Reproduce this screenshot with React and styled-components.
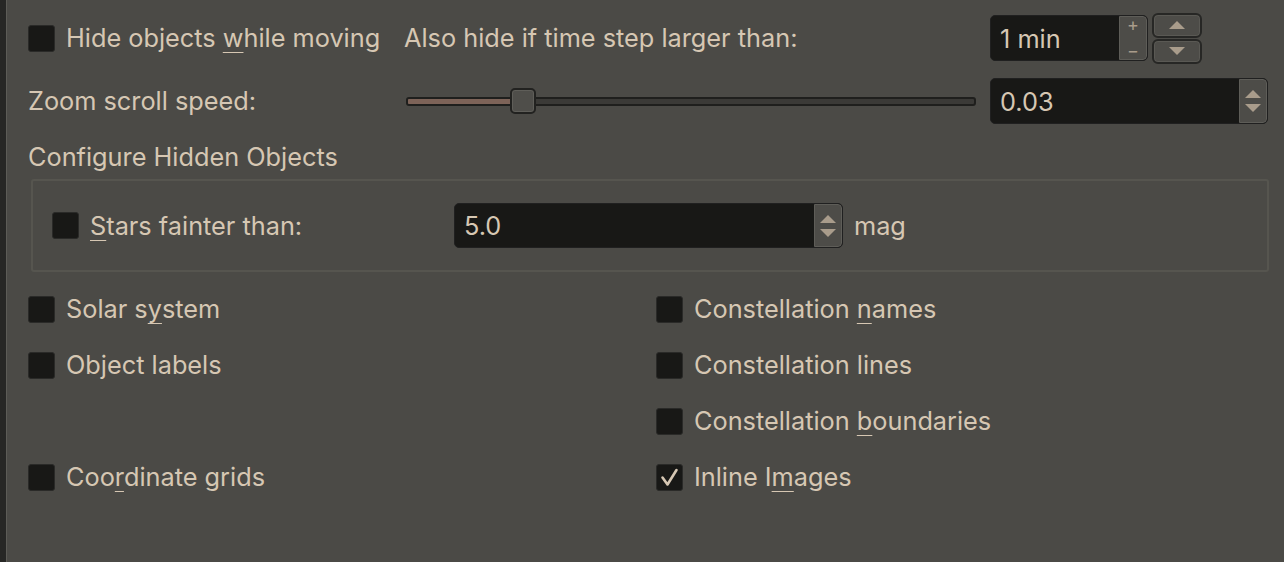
import React from 'react'
import styled, { createGlobalStyle } from 'styled-components'

const colors = {
  bg: '#4b4a46',
  strip: '#272725',
  text: '#d6c7b3',
  field: '#181816',
  fieldBorder: '#2a2a28',
  arrow: '#a99c8b',
  btn: '#4d4c48',
  frame: '#56554f',
}

const GlobalStyle = createGlobalStyle`
  html, body {
    margin: 0;
    padding: 0;
    background: ${colors.bg};
  }
  body {
    font-family: Inter, "Noto Sans", sans-serif;
    color: ${colors.text};
    font-size: 25.3px;
  }
`

const Page = styled.div`
  display: flex;
  width: 1284px;
  height: 562px;
  overflow: hidden;
  background: ${colors.bg};
`

const Strip = styled.div`
  width: 6px;
  background: ${colors.strip};
  border-right: 1px solid #5d5c57;
  flex-shrink: 0;
`

const Content = styled.div`
  flex: 1;
  padding: 12px 15px 0 21px;
  display: flex;
  flex-direction: column;
`

const TopGrid = styled.div`
  display: grid;
  grid-template-columns: 362px 572px 278px;
  column-gap: 14px;
  row-gap: 14px;
  grid-template-rows: 52px 46px;
  align-items: center;
`

const Label = styled.span`
  white-space: nowrap;
  line-height: 1;
`

const Mn = styled.span`
  text-decoration: underline;
  text-decoration-thickness: 1px;
  text-underline-offset: 5px;
`

const CheckRow = styled.label`
  display: flex;
  align-items: center;
  gap: 11px;
  height: ${p => p.$h || 56}px;
  white-space: nowrap;
`

const Box = styled.span`
  width: 27px;
  height: 27px;
  box-sizing: border-box;
  flex-shrink: 0;
  background: ${colors.field};
  border: 1px solid ${colors.fieldBorder};
  border-radius: 3px;
  display: flex;
  align-items: center;
  justify-content: center;
`

const Spin = styled.div`
  display: flex;
  box-sizing: border-box;
  width: ${p => p.$w}px;
  height: ${p => p.$h || 46}px;
  background: ${colors.field};
  border: 1px solid #202020;
  border-radius: 5px;
  overflow: hidden;
`

const SpinText = styled.div`
  flex: 1;
  display: flex;
  align-items: center;
  padding-left: 9px;
`

const SpinButtons = styled.div`
  width: 26px;
  display: flex;
  flex-direction: column;
  align-items: center;
  justify-content: center;
  gap: ${p => p.$gap || 6}px;
  background: ${colors.btn};
  border: 1px solid #5e5d58;
  border-radius: 0 4px 4px 0;
  color: ${colors.arrow};
`

const Sign = styled.span`
  font-size: 18px;
  line-height: 20px;
  height: 20px;
`

const Tri = styled.span`
  width: 0;
  height: 0;
  border-left: 8px solid transparent;
  border-right: 8px solid transparent;
  ${p => (p.$down ? `border-top: 8px solid ${colors.arrow};` : `border-bottom: 8px solid ${colors.arrow};`)}
`

const StepWrap = styled.div`
  display: flex;
  align-items: center;
  gap: 4px;
`

const StepButtons = styled.div`
  display: flex;
  flex-direction: column;
  gap: 1px;
`

const StepBtn = styled.div`
  width: 50px;
  height: 25px;
  box-sizing: border-box;
  background: ${colors.btn};
  border: 2px solid #272725;
  border-radius: 6px;
  display: flex;
  align-items: center;
  justify-content: center;
  box-shadow: inset 0 0 0 1px #5a5954;
`

const Slider = styled.div`
  position: relative;
  height: 26px;
  margin-left: 2px;
  display: flex;
  align-items: center;
`

const Groove = styled.div`
  flex: 1;
  height: 9px;
  box-sizing: border-box;
  border: 2px solid #1f1f1d;
  border-radius: 3px;
  background: #3b3a37;
  overflow: hidden;
  display: flex;
`

const Fill = styled.div`
  background: #7d6358;
  height: 100%;
`

const Handle = styled.div`
  position: absolute;
  top: 0;
  width: 26px;
  height: 26px;
  box-sizing: border-box;
  background: #4f4e4a;
  border: 2px solid #222220;
  border-radius: 5px;
  box-shadow: inset 0 0 0 1px #5f5e59;
`

const Title = styled.div`
  margin-top: 17px;
  height: 30px;
  display: flex;
  align-items: center;
`

const Group = styled.div`
  margin: 8px 0 0 3px;
  width: 1238px;
  height: 93px;
  box-sizing: border-box;
  border: 2px solid ${colors.frame};
  border-radius: 3px;
  display: flex;
  align-items: center;
  padding-left: 19px;
`

const GroupLabel = styled(CheckRow)`
  width: 402px;
`

const Unit = styled.span`
  margin-left: 11px;
`

const Options = styled.div`
  margin-top: 9px;
  display: grid;
  grid-template-columns: 628px 1fr;
  grid-auto-rows: 56px;
`

const Empty = styled.div``

function CheckMark() {
  return (
    <svg width="19" height="19" viewBox="0 0 19 19">
      <polyline
        points="2.5,9.5 7.5,16.5 16.5,2"
        fill="none"
        stroke={colors.text}
        strokeWidth="2.6"
        strokeLinecap="round"
        strokeLinejoin="round"
      />
    </svg>
  )
}

function Check({ checked, children, h }) {
  return (
    <CheckRow $h={h}>
      <Box>{checked ? <CheckMark /> : null}</Box>
      <Label>{children}</Label>
    </CheckRow>
  )
}

function SpinBox({ value, w, h }) {
  return (
    <Spin $w={w} $h={h}>
      <SpinText>{value}</SpinText>
      <SpinButtons>
        <Tri />
        <Tri $down />
      </SpinButtons>
    </Spin>
  )
}

export default function App() {
  const sliderPos = 0.182
  return (
    <Page>
      <GlobalStyle />
      <Strip />
      <Content>
        <TopGrid>
          <Check h={52}>
            Hide objects <Mn>w</Mn>hile moving
          </Check>
          <Label>Also hide if time step larger than:</Label>
          <StepWrap>
            <Spin $w={158} $h={46}>
              <SpinText>1 min</SpinText>
              <SpinButtons $gap={0}>
                <Sign>+</Sign>
                <Sign>−</Sign>
              </SpinButtons>
            </Spin>
            <StepButtons>
              <StepBtn>
                <Tri />
              </StepBtn>
              <StepBtn>
                <Tri $down />
              </StepBtn>
            </StepButtons>
          </StepWrap>

          <Label>Zoom scroll speed:</Label>
          <Slider>
            <Groove>
              <Fill style={{ width: `${sliderPos * 100}%` }} />
            </Groove>
            <Handle style={{ left: `${sliderPos * 100}%` }} />
          </Slider>
          <SpinBox value="0.03" w={278} h={46} />
        </TopGrid>

        <Title>Configure Hidden Objects</Title>
        <Group>
          <GroupLabel>
            <Box />
            <Label>
              <Mn>S</Mn>tars fainter than:
            </Label>
          </GroupLabel>
          <SpinBox value="5.0" w={389} h={45} />
          <Unit>mag</Unit>
        </Group>

        <Options>
          <Check>
            Solar s<Mn>y</Mn>stem
          </Check>
          <Check>
            Constellation <Mn>n</Mn>ames
          </Check>
          <Check>Object labels</Check>
          <Check>Constellation lines</Check>
          <Empty />
          <Check>
            Constellation <Mn>b</Mn>oundaries
          </Check>
          <Check>
            Coo<Mn>r</Mn>dinate grids
          </Check>
          <Check checked>
            Inline I<Mn>m</Mn>ages
          </Check>
        </Options>
      </Content>
    </Page>
  )
}
